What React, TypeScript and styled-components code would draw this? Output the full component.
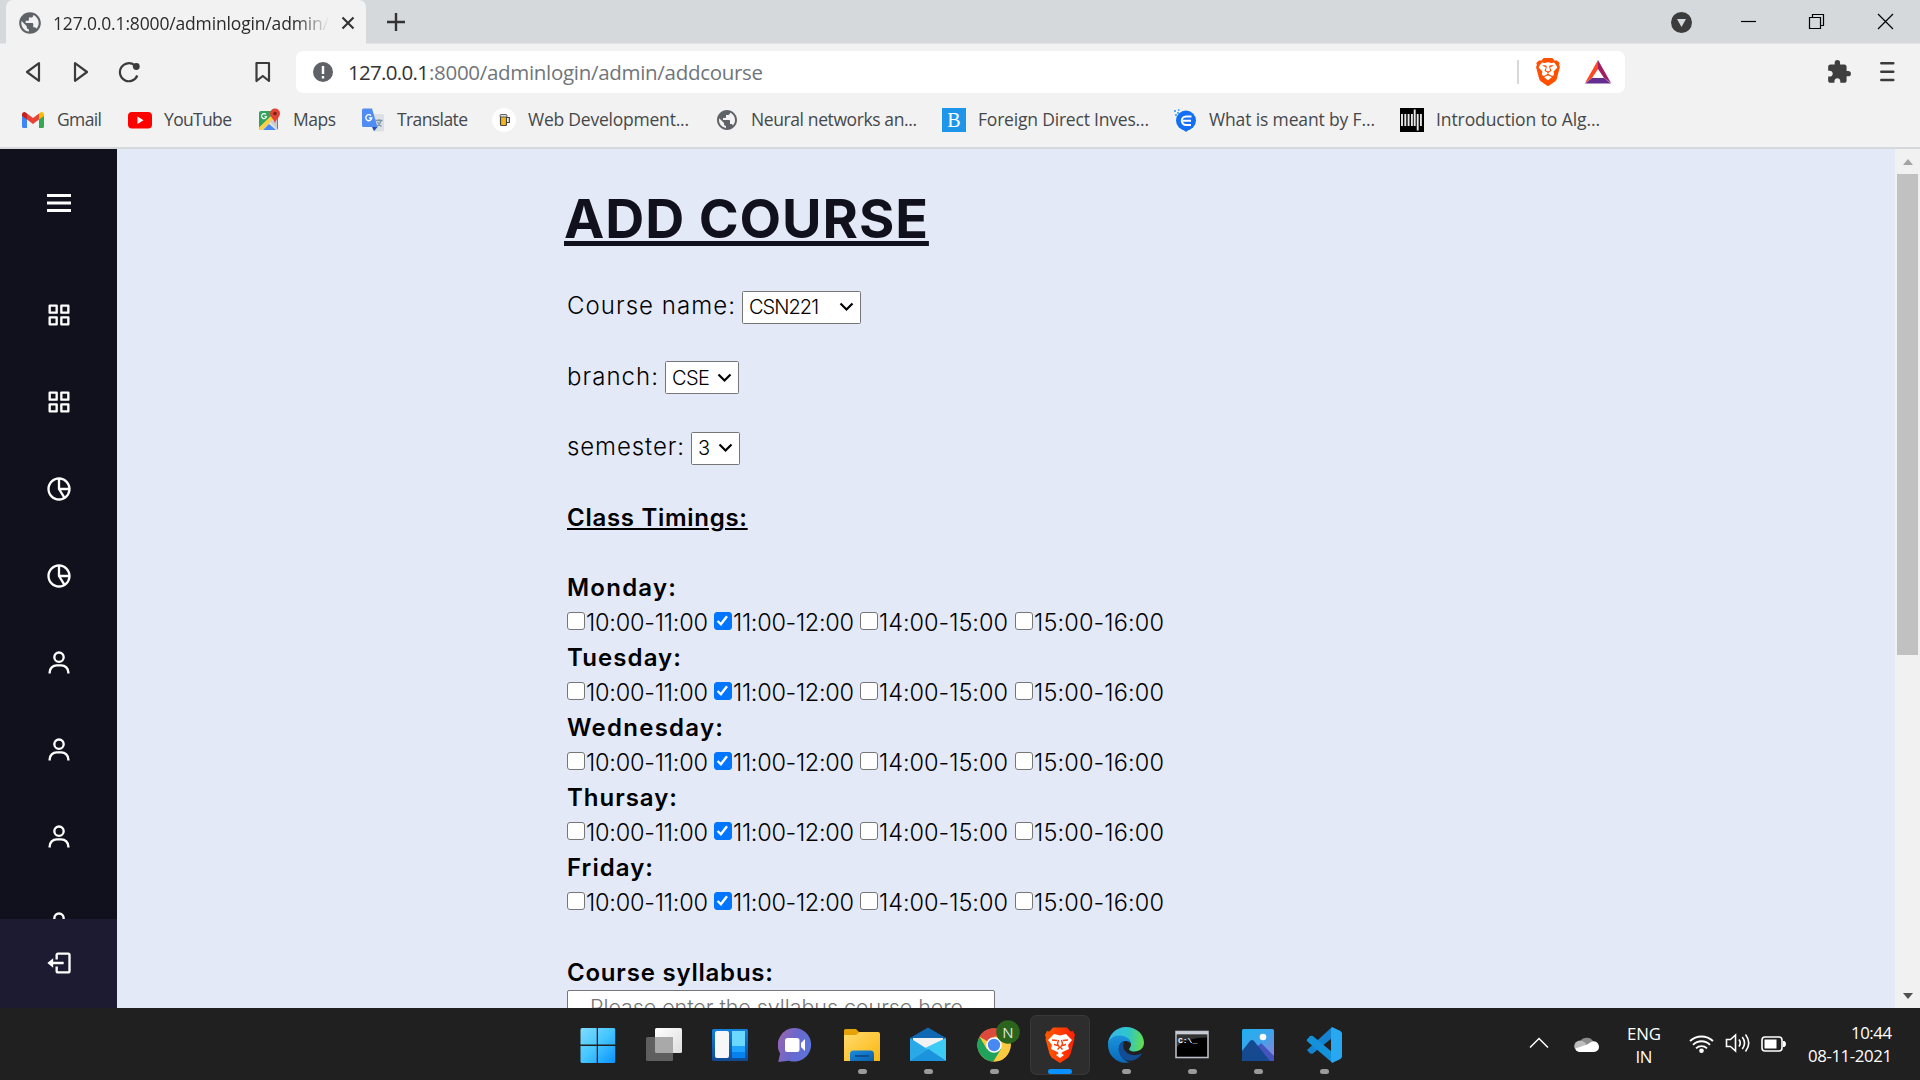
import React, { useLayoutEffect, useRef, useState } from "react";
import styled, { createGlobalStyle } from "styled-components";
import { BiMenu, BiGridAlt, BiPieChartAlt2, BiUser } from "react-icons/bi";
import { MdExtension, MdPublic } from "react-icons/md";
import { SiBrave } from "react-icons/si";

const Global = createGlobalStyle`
  * { box-sizing: border-box; }
  html, body { margin: 0; padding: 0; overflow: hidden; }
  svg { display: block; }
`;

const ui = `"Open Sans", "Noto Sans", sans-serif`;
const pageFont = `Inter, "Open Sans", sans-serif`;

const Screen = styled.div`
  width: 1920px;
  height: 1080px;
  display: flex;
  flex-direction: column;
  overflow: hidden;
  font-family: ${ui};
`;

/* Text whose tracking is tuned so the run takes the given width */
const Run = styled.span<{ $line?: number }>`
  display: inline-block;
  white-space: pre;
  text-decoration: ${(p) => (p.$line ? `underline ${p.$line}px` : "none")};
`;
function Fit({ w, line, children }: { w: number; line?: number; children: string }) {
  const ref = useRef<HTMLSpanElement>(null);
  const [ls, setLs] = useState(0);
  useLayoutEffect(() => {
    const el = ref.current;
    if (el) setLs((w - el.getBoundingClientRect().width) / Math.max(1, children.length - 1));
  }, []);
  return (
    <Run ref={ref} $line={line} style={{ letterSpacing: ls, marginRight: -ls }}>
      {children}
    </Run>
  );
}

/* ---------- Browser chrome ---------- */
const TabStrip = styled.div`
  height: 44px;
  flex: none;
  display: flex;
  background: #d5d9dc;
  border-bottom: 1px solid #e2e4e5;
  padding-left: 6px;
`;
const Tab = styled.div`
  width: 360px;
  height: 44px;
  flex: none;
  background: #f2f2f2;
  border-radius: 7px 7px 0 0;
  display: flex;
  align-items: center;
  padding: 1px 0 0 11px;
  color: #5f6368;
`;
const TabTitle = styled.div`
  width: 276px;
  margin: 0 12px 0 10px;
  overflow: hidden;
  font-size: 17.5px;
  line-height: 24px;
  color: #2b2b2b;
  mask-image: linear-gradient(90deg, #000 88%, transparent 100%);
`;
const NewTab = styled.div`
  padding: 12px 0 0 20px;
  flex: 1;
`;
const WindowButtons = styled.div`
  display: flex;
  align-items: flex-start;
  padding-top: 12px;
`;
const WinBtn = styled.div<{ $w: number }>`
  width: ${(p) => p.$w}px;
`;

const Toolbar = styled.div`
  height: 56px;
  flex: none;
  display: flex;
  align-items: center;
  background: #f2f2f2;
  padding-left: 25px;
  color: #3b3b3b;
`;
const NavIcon = styled.div<{ $w: number }>`
  width: ${(p) => p.$w}px;
  flex: none;
`;
const Address = styled.div`
  width: 1329px;
  height: 42px;
  flex: none;
  background: #fff;
  border-radius: 7px;
  display: flex;
  align-items: center;
  padding-left: 17px;
`;
const Url = styled.div`
  flex: 1;
  padding: 0 0 0 15px;
  font-size: 20.5px;
  line-height: 28px;
  color: #70757a;
  display: flex;
`;
const UrlHost = styled.span`
  color: #333;
`;
const Divider = styled.div`
  width: 2px;
  height: 24px;
  background: #d5d9dc;
  margin-right: 15px;
`;
const BraveMark = styled.div`
  width: 28px;
  height: 28px;
  margin-right: 23px;
`;
const Bat = styled.div`
  margin-right: 14px;
`;
const Bookmarks = styled.div`
  height: 47px;
  flex: none;
  background: #f2f2f2;
  display: flex;
  align-items: flex-start;
  padding: 7px 0 0 21px;
`;
const BookmarksLine = styled.div`
  height: 2px;
  flex: none;
  background: #d5d9dc;
`;
const Bookmark = styled.div<{ $slot: number }>`
  display: flex;
  align-items: center;
  gap: 12px;
  width: ${(p) => p.$slot + 36}px;
  height: 25px;
  font-size: 17.5px;
  line-height: 23px;
  color: #45484b;
  svg { flex: none; }
`;

/* ---------- Page ---------- */
const Page = styled.div`
  height: 859px;
  flex: none;
  display: flex;
  background: #e4e9f7;
  overflow: hidden;
`;
const Sidebar = styled.nav`
  width: 117px;
  flex: none;
  display: flex;
  flex-direction: column;
  background: #11101d;
  color: #fff;
`;
const MenuToggle = styled.div`
  height: 122px;
  flex: none;
  padding: 36px 0 0 41px;
`;
const SideList = styled.div`
  flex: 1;
  overflow: hidden;
`;
const SideItem = styled.div`
  height: 87px;
  display: flex;
  align-items: center;
  justify-content: center;
`;
const Logout = styled.div`
  height: 89px;
  flex: none;
  background: #1d1b31;
  display: flex;
  align-items: center;
  justify-content: center;
  padding: 0 0 1px 1px;
`;
const Main = styled.main`
  flex: 1;
  padding-left: 447px;
  font-family: ${pageFont};
`;
const Title = styled.h1`
  margin: 0;
  padding-top: 38px;
  height: 139px;
  font-size: 54px;
  font-weight: 700;
  line-height: 63px;
  color: #11101d;
  text-underline-offset: 3px;
  text-decoration-skip-ink: none;
`;
const Form = styled.form`
  padding-left: 3px;
  font-size: 24px;
  font-weight: 300;
  line-height: 36px;
  color: #000;
`;
const Field = styled.div`
  height: 35px;
  margin-bottom: 35.5px;
  display: flex;
  align-items: flex-start;
  gap: 7px;
`;
const SelectBox = styled.div<{ $w: number }>`
  width: ${(p) => p.$w}px;
  height: 33px;
  margin-top: 2.5px;
  border: 1px solid #767676;
  border-radius: 1.5px;
  background: #fff;
  display: flex;
  align-items: center;
  justify-content: space-between;
  padding: 0 6px 0 6px;
  font-size: 20px;
  line-height: 30px;
  font-weight: 300;
`;
const Strong = styled.div<{ $under?: boolean }>`
  height: 35px;
  font-weight: 600;
  text-underline-offset: 2px;
  margin-bottom: ${(p) => (p.$under ? "35px" : "0")};
`;
const Slots = styled.div`
  height: 35px;
  display: flex;
  font-size: 23.5px;
`;
const Slot = styled.label<{ $w: number }>`
  display: flex;
  width: ${(p) => p.$w}px;
  gap: 1px;
`;
const Check = styled.span<{ $on: boolean }>`
  width: 18px;
  height: 18px;
  flex: none;
  margin-top: 7px;
  border-radius: 3px;
  border: 1.5px solid ${(p) => (p.$on ? "#0075ff" : "#767676")};
  background: ${(p) => (p.$on ? "#0075ff" : "#fff")};
`;
const Gap = styled.div`
  height: 35px;
`;
const Syllabus = styled.div`
  width: 428px;
  height: 60px;
  border: 1.5px solid #767676;
  border-radius: 2px;
  background: #fff;
  padding: 2px 0 0 22px;
  font-size: 21.5px;
  line-height: 28px;
  color: #757575;
`;
const Scrollbar = styled.div`
  width: 25px;
  flex: none;
  background: #f1f1f1;
  display: flex;
  flex-direction: column;
  align-items: center;
`;
const Arrow = styled.div<{ $down?: boolean }>`
  width: 0;
  height: 0;
  border: 5.5px solid transparent;
  border-top: ${(p) => (p.$down ? "6px solid #505050" : "0")};
  border-bottom: ${(p) => (p.$down ? "0" : "6px solid #a3a3a3")};
  margin: ${(p) => (p.$down ? "auto 0 9px" : "10px 0 9px")};
`;
const Thumb = styled.div`
  width: 21px;
  height: 481px;
  background: #c1c1c1;
`;

/* ---------- Taskbar ---------- */
const Taskbar = styled.footer`
  height: 72px;
  flex: none;
  background: #202020;
  display: flex;
  color: #fff;
  padding-left: 565px;
`;
const TaskButton = styled.div<{ $active?: boolean }>`
  width: 60px;
  height: 60px;
  margin: 7px 3px 0;
  flex: none;
  display: flex;
  flex-direction: column;
  align-items: center;
  justify-content: flex-start;
  padding-top: 12px;
  border-radius: 7px;
  background: ${(p) => (p.$active ? "#2d2d2d" : "transparent")};
  box-shadow: ${(p) => (p.$active ? "inset 0 0 0 1px #383838" : "none")};
`;
const Dot = styled.div<{ $active?: boolean }>`
  width: ${(p) => (p.$active ? 24 : 9)}px;
  height: 5px;
  margin-top: 6px;
  border-radius: 3px;
  background: ${(p) => (p.$active ? "#0a91ff" : "#9a9a9a")};
`;
const Tray = styled.div`
  display: flex;
  margin-left: 172px;
  align-items: flex-start;
`;
const TrayIcon = styled.div<{ $w: number; $top: number }>`
  width: ${(p) => p.$w}px;
  padding-top: ${(p) => p.$top}px;
`;
const TrayText = styled.div<{ $w: number; $end?: boolean }>`
  width: ${(p) => p.$w}px;
  padding-top: ${(p) => (p.$end ? 13 : 14)}px;
  font-size: 16.8px;
  line-height: 23px;
  display: flex;
  flex-direction: column;
  align-items: ${(p) => (p.$end ? "flex-end" : "center")};
`;

/* ---------- Drawings ---------- */
const Chevron = () => (
  <svg width="15" height="10" viewBox="0 0 15 10"><path d="M1.500 1.500l6 6 6-6" fill="none" stroke="#000" strokeWidth="2.200" /></svg>
);
const Tick = () => (
  <svg width="15" height="15" viewBox="0 0 15 15"><path d="M2.600 8l3.300 3.300L12 3.200" fill="none" stroke="#fff" strokeWidth="2.400" /></svg>
);
const GmailIcon = () => (
  <svg width="24" height="24" viewBox="0 0 24 24">
    <path d="M1 6v12.500a1.500 1.500 0 0 0 1.500 1.500H6V10z" fill="#4285f4" />
    <path d="M23 6v12.500a1.500 1.500 0 0 1-1.500 1.500H18V10z" fill="#34a853" />
    <path d="M6 5.500v6l6 4.500 6-4.500v-6L12 10z" fill="#ea4335" />
    <path d="M1 6.500V8l5 3.500v-6L4.500 4.400C3 3.300 1 4.500 1 6.500z" fill="#c5221f" />
    <path d="M23 6.500V8l-5 3.500v-6l1.500-1.100C21 3.300 23 4.500 23 6.500z" fill="#fbbc04" />
  </svg>
);
const YouTubeIcon = () => (
  <svg width="24" height="24" viewBox="0 0 24 24">
    <rect y="4" width="24" height="16.500" rx="4" fill="#f00" /><path d="M9.500 8.500l6 3.700-6 3.700z" fill="#fff" />
  </svg>
);
const MapsIcon = () => (
  <svg width="24" height="24" viewBox="0 0 24 24">
    <rect x="2" y="3" width="19" height="19" rx="2" fill="#34a35b" />
    <path d="M2 20L20 3v19H4z" fill="#dfe3e8" /><path d="M2 19.500L14 8l3 3L5 22H3z" fill="#fdd045" />
    <path d="M6 22l6-6 7 6z" fill="#4a89f3" />
    <path d="M12.500 13l7.500 8V12z" fill="#c9ced4" />
    <path d="M18 0.500a5 5 0 0 0-5 5c0 4 4 5 5 10 1-5 5-6 5-10a5 5 0 0 0-5-5z" fill="#e04335" /><circle cx="18" cy="5.500" r="1.800" fill="#7d1f18" />
    <path d="M9 6.500a2.500 2.500 0 1 0 .5 2H7.500" fill="none" stroke="#fff" strokeWidth="1.200" />
  </svg>
);
const TranslateIcon = () => (
  <svg width="24" height="24" viewBox="0 0 24 24">
    <path d="M9 6h12.500a1.500 1.500 0 0 1 1.500 1.500V22a1.500 1.500 0 0 1-1.500 1.500H14z" fill="#dcdfe3" />
    <path d="M14.500 12.500h7M18 11v1.500M20 12.500c-.5 3-2.500 5-4 6M16.500 14c.8 2 2.500 3.500 4 4.500" fill="none" stroke="#7b98a8" strokeWidth="1.300" />
    <path d="M2.500.5H11L16.500 19H2.500A1.500 1.500 0 0 1 1 17.500V2A1.500 1.500 0 0 1 2.500.5z" fill="#4f8df5" /><path d="M11 19h5.500L13 23.300z" fill="#2a51b0" />
    <path d="M10 7.600a3 3 0 1 0 .8 2.400H8" fill="none" stroke="#fff" strokeWidth="1.400" />
  </svg>
);
const BeerIcon = () => (
  <svg width="24" height="24" viewBox="0 0 24 24">
    <circle cx="12" cy="12" r="12" fill="#fff" />
    <rect x="8.500" y="7.500" width="6" height="10" rx="1" fill="#f4b71b" stroke="#444" strokeWidth="1.200" />
    <path d="M15 9.500h2.300v5H15" fill="none" stroke="#444" strokeWidth="1.200" /><rect x="8" y="6.500" width="7" height="2.500" rx="1" fill="#ddd" stroke="#555" strokeWidth=".9" />
  </svg>
);
const BIcon = () => (
  <svg width="24" height="24" viewBox="0 0 24 24">
    <rect width="24" height="24" fill="#1d96ea" />
    <text x="12" y="19" textAnchor="middle" fontFamily="Liberation Serif, serif" fontSize="20" fill="#fff">B</text>
  </svg>
);
const EIcon = () => (
  <svg width="24" height="24" viewBox="0 0 24 24">
    <circle cx="13" cy="12.500" r="10" fill="#146ff5" /><path d="M9.500 21l3.500 3 3.500-3z" fill="#146ff5" />
    <path d="M18.500 8.500h-5.500a4.200 4.200 0 0 0 0 8.400h5M10 12.700h8" fill="none" stroke="#fff" strokeWidth="2" />
    <path d="M1 3h2M4 5h2M2 7h2M5 2h1.500" stroke="#55aef7" strokeWidth="1.800" />
  </svg>
);
const MitIcon = () => (
  <svg width="24" height="24" viewBox="0 0 24 24">
    <rect width="24" height="24" fill="#000" />
    <path d="M2 6v12M5.300 6v12M8.600 6v12M11.900 6v12M14.700 1.500V18M17.700 6v16.500M20.900 6v12" stroke="#e8e8e8" strokeWidth="1.900" />
  </svg>
);
const LogoutIcon = () => (
  <svg width="28" height="28" viewBox="0 0 24 24" fill="#fff">
    <path d="M16 13v-2H7V8l-5 4 5 4v-3z" />
    <path d="M20 3h-9c-1.103 0-2 .897-2 2v4h2V5h9v14h-9v-4H9v4c0 1.103.897 2 2 2h9c1.103 0 2-.897 2-2V5c0-1.103-.897-2-2-2z" />
  </svg>
);
const StartIcon = () => (
  <svg width="36" height="36" viewBox="0 0 36 36">
    <defs><linearGradient id="st" x1="0" y1="0" x2="1" y2="1"><stop offset="0" stopColor="#80dcff" /><stop offset=".5" stopColor="#44c5ff" /><stop offset="1" stopColor="#0a92ff" /></linearGradient></defs>
    <path d="M2 1h14.700v16.500H.5V2.500A1.500 1.500 0 0 1 2 1zM18 1H33.700a1.500 1.500 0 0 1 1.500 1.500v15H18zM.5 19h16.200v17H2a1.500 1.500 0 0 1-1.500-1.500zM18 19h17.200v15.500A1.500 1.500 0 0 1 33.700 36H18z" fill="url(#st)" />
  </svg>
);
const TaskViewIcon = () => (
  <svg width="36" height="36" viewBox="0 0 36 36">
    <defs><linearGradient id="tv" x1="0" y1="0" x2="1" y2="1"><stop offset="0" stopColor="#fff" /><stop offset="1" stopColor="#ddd" /></linearGradient></defs>
    <rect x="9" y="1" width="27" height="25" rx="1.500" fill="url(#tv)" /><rect y="10" width="27" height="24" rx="1.500" fill="#5f5f5f" /><path d="M9 10h17a1 1 0 0 1 1 1v15H10a1 1 0 0 1-1-1z" fill="#a9a9a9" />
  </svg>
);
const WidgetsIcon = () => (
  <svg width="36" height="36" viewBox="0 0 36 36">
    <defs><linearGradient id="wd" x1="0" y1="0" x2="0" y2="1"><stop offset="0" stopColor="#1380dc" /><stop offset="1" stopColor="#104a91" /></linearGradient></defs>
    <rect y="2" width="36" height="32" rx="1.500" fill="url(#wd)" /><rect x="3" y="4" width="14" height="27" rx="2" fill="#f7f7f7" />
    <path d="M20 4h13v15H20z" fill="#6ad8ff" /><path d="M20 19h13v6H20z" fill="#1fa3ff" /><path d="M20 25h13v6H20z" fill="#0682ef" />
  </svg>
);
const ChatIcon = () => (
  <svg width="36" height="36" viewBox="0 0 36 36">
    <defs><linearGradient id="ch" x1="0" y1=".2" x2="1" y2=".6"><stop offset="0" stopColor="#9a66b0" /><stop offset=".5" stopColor="#6a68cc" /><stop offset="1" stopColor="#5b74dc" /></linearGradient></defs>
    <path d="M17.500 1a16.800 16.800 0 1 1-6.500 32.700L.3 35l1.800-8.500A17 17 0 0 1 17.500 1z" fill="url(#ch)" />
    <rect x="7" y="11" width="14.500" height="14" rx="2.500" fill="#fff" /><path d="M23 16l4-4v12l-4-4z" fill="#fff" />
  </svg>
);
const FolderIcon = () => (
  <svg width="36" height="36" viewBox="0 0 36 36">
    <defs><linearGradient id="fo" x1="0" y1="0" x2="1" y2="1"><stop offset="0" stopColor="#ffdb6e" /><stop offset="1" stopColor="#fbb70f" /></linearGradient><linearGradient id="fb" x1="0" y1="0" x2="1" y2="1"><stop offset="0" stopColor="#1b8ddb" /><stop offset="1" stopColor="#0a5fae" /></linearGradient></defs>
    <path d="M0 3.500A1.500 1.500 0 0 1 1.500 2H12l4 4-4 4H0z" fill="#e5a206" />
    <path d="M0 8h12l3.500-3H34a2 2 0 0 1 2 2v27H0z" fill="url(#fo)" />
    <path d="M6 34V27a3.500 3.500 0 0 1 3.500-3.500h17A3.500 3.500 0 0 1 30 27v7z" fill="url(#fb)" /><path d="M11 29h14" stroke="#0b4c8c" strokeWidth="1.800" />
  </svg>
);
const MailIcon = () => (
  <svg width="36" height="36" viewBox="0 0 36 36">
    <path d="M0 11L18 .5 36 11 30 22H6z" fill="#1068b5" /><path d="M3 11h30v8L18 25 3 19z" fill="#f2f2f2" />
    <path d="M36 11v23L15 21z" fill="#3ccbf4" /><path d="M0 11v23h36z" fill="#2aa9e8" /><path d="M0 34h36L18.500 22z" fill="#1b93dd" />
  </svg>
);
const ChromeIcon = () => (
  <svg width="36" height="36" viewBox="0 0 36 36" overflow="visible">
    <circle cx="18" cy="18" r="16.600" fill="#fcca3f" />
    <path d="M18 18L3.600 9.700A16.600 16.600 0 0 1 32.400 9.700H18z" fill="#dc4a3d" />
    <path d="M18 18L10.800 22 3.600 9.700A16.600 16.600 0 0 0 17.500 34.600L25.200 22z" fill="#1fa35c" />
    <path d="M18 9.700h14.400A16.600 16.600 0 0 1 17.500 34.600L25.200 22z" fill="#fcca3f" />
    <circle cx="18" cy="18" r="7.800" fill="#fff" /><circle cx="18" cy="18" r="6.200" fill="#4788f3" />
    <circle cx="32" cy="5" r="11.800" fill="#2c641d" />
    <text x="32" y="10.500" textAnchor="middle" fontFamily="Open Sans, sans-serif" fontSize="15" fill="#dfe8dc">N</text>
  </svg>
);
const BraveTaskIcon = () => (
  <svg width="36" height="36" viewBox="0 0 36 36">
    <defs><linearGradient id="bt" x1="0" y1="0" x2="1" y2="0"><stop offset="0" stopColor="#ff5a00" /><stop offset="1" stopColor="#ff2000" /></linearGradient></defs>
    <path d="M11 .5h14l3.500 4 2.500-.5 2 4-1 3 .5 1-4 15-2 3.500L18 36l-8.500-5.500-2-3.500-4-15 .5-1-1-3 2-4 2.500.5z" fill="url(#bt)" />
    <path d="M18 8.500l6-1.500 6 6-4 5 1 4-6.500 3-1.500 2h-2l-1.500-2L9 22l1-4-4-5 6-6z" fill="#fff" />
    <path d="M14 28l4-2.500 4 2.500-4 3z" fill="#fff" />
    <path d="M10 13l5 .5M26 13l-5 .5M12 17.500l4 1M24 17.500l-4 1M16.500 13l-1 4 2 3.500-2 2M19.500 13l1 4-2 3.500 2 2" fill="none" stroke="#ff3c08" strokeWidth="1.400" />
  </svg>
);
const EdgeIcon = () => (
  <svg width="36" height="36" viewBox="0 0 36 36">
    <defs>
      <linearGradient id="e1" x1="0" y1=".4" x2="1" y2=".5"><stop offset="0" stopColor="#35b6ee" /><stop offset=".55" stopColor="#2fc6c9" /><stop offset="1" stopColor="#64dc4c" /></linearGradient>
      <linearGradient id="e2" x1="0" y1="0" x2="0" y2="1"><stop offset="0" stopColor="#1a93dc" /><stop offset="1" stopColor="#0a69bd" /></linearGradient>
    </defs>
    <path d="M0 18C0 8 8 0 18 0s18 7 18 15.500C36 21 32 24.500 26.500 24.500c-4.500 0-6-1.700-5-3.200 1-1.600 1.500-2.500 1.500-4C23 13 18 10 12 10 5 10 1 14 0 18z" fill="url(#e1)" />
    <path d="M0 18c0-5 4.500-9.500 11.500-9.500 6.500 0 11.500 4 11.500 8.500-1-2-3-3-5.500-3-4 0-7 4-6.500 9 .6 6 5 11 11 12.300C9 38 0 28.500 0 18z" fill="url(#e2)" />
    <path d="M14.500 15c-5 3-5 10-1 15 4.500 5.500 14 5.500 20-2.500.4-.8-.3-1.200-1-.8-6 3-13 1-16-3.500-1.500-2.500-1.700-5.500-.5-8z" fill="#124d95" />
  </svg>
);
const CmdIcon = () => (
  <svg width="36" height="36" viewBox="0 0 36 36">
    <rect x="2" y="4.500" width="32" height="26" fill="#000" stroke="#b8bcc5" strokeWidth="1.600" /><rect x="2" y="4.500" width="32" height="3" fill="#c7cbd3" />
    <path d="M3 8h30v2.500C18 11 8 14 3 20z" fill="#555" opacity=".6" />
    <text x="4" y="15.500" fontFamily="Liberation Mono, monospace" fontWeight="700" fontSize="8" fill="#fff">C:\_</text>
  </svg>
);
const PhotosIcon = () => (
  <svg width="36" height="36" viewBox="0 0 36 36">
    <defs><linearGradient id="ph" x1="0" y1="0" x2="1" y2="1"><stop offset="0" stopColor="#1fb0f0" /><stop offset=".5" stopColor="#3fa3ea" /><stop offset="1" stopColor="#9a7ad9" /></linearGradient></defs>
    <rect x="2" y="2" width="32" height="32" rx="1.500" fill="url(#ph)" /><path d="M34 29v5H20l-3-14 4-4z" fill="#4553bd" /><path d="M2 24l8-10q2-2 4 0l16 20H3.500A1.500 1.500 0 0 1 2 32.500z" fill="#154a91" /><circle cx="23" cy="10" r="3.300" fill="#fff" />
  </svg>
);
const CodeIcon = () => (
  <svg width="36" height="36" viewBox="0 0 36 36">
    <path d="M1 23l3 3.500 2.500.2L26 11V0L1 23z" fill="#1583cf" />
    <path d="M1 12.500l3-3.500 2.500-.2L26 25v10.500L.8 14z" fill="#1491d8" />
    <path d="M26 0l8.500 4L36 6v24l-1.500 2L26 36l-1-2V2z" fill="#29a8f2" />
  </svg>
);

const bookmarks: [string, number, number, React.ReactNode][] = [
  ["Gmail", 45, 71, <GmailIcon />],
  ["YouTube", 68, 93, <YouTubeIcon />],
  ["Maps", 43, 68, <MapsIcon />],
  ["Translate", 71, 95, <TranslateIcon />],
  ["Web Development...", 161, 187, <BeerIcon />],
  ["Neural networks an...", 166, 191, <MdPublic size={24} color="#5f6368" />],
  ["Foreign Direct Inves...", 171, 195, <BIcon />],
  ["What is meant by F...", 166, 191, <EIcon />],
  ["Introduction to Alg...", 164, 190, <MitIcon />],
];
const sideIcons = [BiGridAlt, BiGridAlt, BiPieChartAlt2, BiPieChartAlt2, BiUser, BiUser, BiUser, BiUser];
const days: [string, number][] = [["Monday:", 109], ["Tuesday:", 114], ["Wednesday:", 156], ["Thursay:", 110], ["Friday:", 86]];
const times: [string, number, number][] = [["10:00-11:00", 122, 147], ["11:00-12:00", 121, 146], ["14:00-15:00", 129, 155], ["15:00-16:00", 130, 155]];
const apps: [React.ComponentType, number][] = [
  [StartIcon, 0], [TaskViewIcon, 0], [WidgetsIcon, 0], [ChatIcon, 0], [FolderIcon, 1], [MailIcon, 1],
  [ChromeIcon, 1], [BraveTaskIcon, 2], [EdgeIcon, 1], [CmdIcon, 1], [PhotosIcon, 1], [CodeIcon, 1],
];

export default function App() {
  return (
    <Screen>
      <Global />
      <TabStrip>
        <Tab>
          <MdPublic size={26} />
          <TabTitle><Fit w={276}>127.0.0.1:8000/adminlogin/admin/</Fit></TabTitle>
          <svg width="14" height="14" viewBox="0 0 14 14"><path d="M1.500 1.500l11 11M12.500 1.500l-11 11" stroke="#333" strokeWidth="2.100" /></svg>
        </Tab>
        <NewTab>
          <svg width="20" height="20" viewBox="0 0 20 20"><path d="M10 1v18M1 10h18" stroke="#333" strokeWidth="2.400" /></svg>
        </NewTab>
        <WindowButtons>
          <WinBtn $w={70}><svg width="22" height="22" viewBox="0 0 22 22"><circle cx="10.500" cy="10.500" r="10.500" fill="#3b3b3b" /><path d="M6 7h9L10.500 15z" fill="#d5d9dc" /></svg></WinBtn>
          <WinBtn $w={67}><svg width="16" height="18"><path d="M0 9.500h15" stroke="#000" strokeWidth="1.200" /></svg></WinBtn>
          <WinBtn $w={69}><svg width="18" height="18" viewBox="0 0 18 18"><path d="M1.500 5.500h11v11h-11zM4.500 5.500v-3h11v11h-3" fill="none" stroke="#000" strokeWidth="1.200" /></svg></WinBtn>
          <WinBtn $w={43}><svg width="18" height="18" viewBox="0 0 18 18"><path d="M1 2l15 15M16 2l-15 15" stroke="#000" strokeWidth="1.200" /></svg></WinBtn>
        </WindowButtons>
      </TabStrip>

      <Toolbar>
        <NavIcon $w={47}><svg width="16" height="22" viewBox="0 0 16 22"><path d="M14 2.200v17.600L2 11z" fill="none" stroke="currentColor" strokeWidth="2.200" strokeLinejoin="round" /></svg></NavIcon>
        <NavIcon $w={46}><svg width="16" height="22" viewBox="0 0 16 22"><path d="M3 2.200v17.600L15 11z" fill="none" stroke="currentColor" strokeWidth="2.200" strokeLinejoin="round" /></svg></NavIcon>
        <NavIcon $w={137}><svg width="22" height="22" viewBox="0 0 22 22"><path d="M19.300 14.500a9 9 0 1 1-2.600-10.200" fill="none" stroke="currentColor" strokeWidth="2.200" /><circle cx="18.300" cy="5.500" r="3.400" fill="currentColor" /></svg></NavIcon>
        <NavIcon $w={41}><svg width="16" height="22" viewBox="0 0 16 22"><path d="M1.500 2h12.500v18l-6.200-5-6.300 5z" fill="none" stroke="currentColor" strokeWidth="2.200" strokeLinejoin="round" /></svg></NavIcon>
        <Address>
          <svg width="20" height="20" viewBox="0 0 20 20"><circle cx="10" cy="10" r="10" fill="#5f6368" /><path d="M10 4v8M10 14v2.400" stroke="#fff" strokeWidth="2.400" /></svg>
          <Url><UrlHost><Fit w={81}>127.0.0.1</Fit></UrlHost><Fit w={334}>:8000/adminlogin/admin/addcourse</Fit></Url>
          <Divider />
          <BraveMark><SiBrave size={28} color="#ff5000" /></BraveMark>
          <Bat><svg width="26" height="24" viewBox="0 0 26 24"><path d="M13 0L0 23l7-5 6-9z" fill="#ff4724" /><path d="M13 0l13 23-7-5-6-9z" fill="#9e1f63" /><path d="M0 23.500h26L19 18H7z" fill="#662d91" /></svg></Bat>
        </Address>
        <NavIcon $w={201} />
        <NavIcon $w={54}><MdExtension size={26} color="#3f3f3f" /></NavIcon>
        <NavIcon $w={16}><svg width="15" height="22" viewBox="0 0 15 22"><path d="M1.300 2.300h12M1.300 10.700h12M1.300 19h12" stroke="currentColor" strokeWidth="2.500" strokeLinecap="round" /></svg></NavIcon>
      </Toolbar>

      <Bookmarks>
        {bookmarks.map(([label, w, slot, icon]) => (
          <Bookmark key={label} $slot={slot}>{icon}<Fit w={w}>{label}</Fit></Bookmark>
        ))}
      </Bookmarks>
      <BookmarksLine />

      <Page>
        <Sidebar>
          <MenuToggle><BiMenu size={36} /></MenuToggle>
          <SideList>
            {sideIcons.map((Icon, i) => <SideItem key={i}><Icon size={28} /></SideItem>)}
          </SideList>
          <Logout><LogoutIcon /></Logout>
        </Sidebar>
        <Main>
          <Title><Fit w={364} line={5}>ADD COURSE</Fit></Title>
          <Form>
            <Field><Fit w={168}>Course name:</Fit><SelectBox $w={119}><Fit w={70}>CSN221</Fit><Chevron /></SelectBox></Field>
            <Field><Fit w={91}>branch:</Fit><SelectBox $w={74}><Fit w={38}>CSE</Fit><Chevron /></SelectBox></Field>
            <Field><Fit w={117}>semester:</Fit><SelectBox $w={49}><Fit w={12}>3</Fit><Chevron /></SelectBox></Field>
            <Strong $under><Fit w={180} line={2}>Class Timings:</Fit></Strong>
            {days.map(([day, w]) => (
              <React.Fragment key={day}>
                <Strong><Fit w={w}>{day}</Fit></Strong>
                <Slots>
                  {times.map(([t, tw, slot], i) => (
                    <Slot key={t} $w={slot}><Check $on={i === 1}>{i === 1 && <Tick />}</Check><Fit w={tw}>{t}</Fit></Slot>
                  ))}
                </Slots>
              </React.Fragment>
            ))}
            <Gap />
            <Strong><Fit w={206}>Course syllabus:</Fit></Strong>
            <Syllabus><Fit w={373}>Please enter the syllabus course here</Fit></Syllabus>
          </Form>
        </Main>
        <Scrollbar><Arrow /><Thumb /><Arrow $down /></Scrollbar>
      </Page>

      <Taskbar>
        {apps.map(([Icon, state], i) => (
          <TaskButton key={i} $active={state === 2}>
            <Icon />
            {state > 0 && <Dot $active={state === 2} />}
          </TaskButton>
        ))}
        <Tray>
          <TrayIcon $w={45} $top={29}><svg width="20" height="12" viewBox="0 0 20 12"><path d="M1 10.500L10 1.500l9 9" fill="none" stroke="#fff" strokeWidth="1.500" /></svg></TrayIcon>
          <TrayIcon $w={48} $top={28}><svg width="25" height="16" viewBox="-1 0 25 16"><path d="M5 6a7 6 0 0 1 13-1l-6 6z" fill="#8b8b8b" /><path d="M5 16A5 5 0 0 1 5 4.500q3 0 6 3L9 16z" fill="#bdbdbd" /><path d="M12 8.500l5-3c5-1 7 3 7 5.500a5 5 0 0 1-5 5H5c-2 0-4-1.500-4.500-3.500z" fill="#fff" /></svg></TrayIcon>
          <TrayText $w={44}><Fit w={34}>ENG</Fit><Fit w={17}>IN</Fit></TrayText>
          <TrayIcon $w={58} $top={26}><svg width="48" height="20" viewBox="0 0 48 20"><g fill="none" stroke="#fff" strokeWidth="1.800"><path d="M24 7a17 17 0 0 1 23 0M27 10.800a12 12 0 0 1 17 0M30 14.300a8 8 0 0 1 11 0" /></g><circle cx="35.500" cy="16.800" r="2.300" fill="#fff" /></svg></TrayIcon>
          <TrayIcon $w={37} $top={24}><svg width="26" height="22" viewBox="0 0 26 22"><g fill="none" stroke="#fff" strokeWidth="1.600"><path d="M2.500 7.500h4L11.500 3v16l-5-4.500h-4zM15 7.500q2.500 3.500 0 7M18.300 5q4.500 6 0 12M21.500 2.500q6.500 8.500 0 17" /></g></svg></TrayIcon>
          <TrayIcon $w={47} $top={28}><svg width="26" height="16" viewBox="0 0 26 16"><rect x="1" y="1" width="20" height="14" rx="3" fill="none" stroke="#fff" strokeWidth="1.600" /><rect x="3.500" y="3.500" width="12" height="9" fill="#fff" /><path d="M22 5h1.500q1.500 1 1.500 3t-1.500 3H22z" fill="#fff" /></svg></TrayIcon>
          <TrayText $w={84} $end><Fit w={41}>10:44</Fit><Fit w={84}>08-11-2021</Fit></TrayText>
        </Tray>
      </Taskbar>
    </Screen>
  );
}
